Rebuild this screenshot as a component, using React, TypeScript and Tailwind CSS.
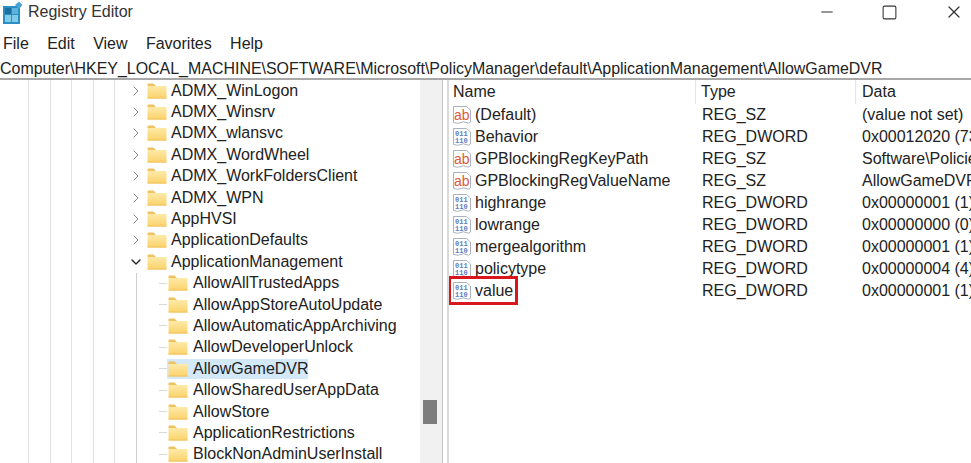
import { ChevronRight, ChevronDown, Minus, Square, X } from 'lucide-react';

const topKeys = [
  'ADMX_WinLogon',
  'ADMX_Winsrv',
  'ADMX_wlansvc',
  'ADMX_WordWheel',
  'ADMX_WorkFoldersClient',
  'ADMX_WPN',
  'AppHVSI',
  'ApplicationDefaults',
];

const childKeys = [
  'AllowAllTrustedApps',
  'AllowAppStoreAutoUpdate',
  'AllowAutomaticAppArchiving',
  'AllowDeveloperUnlock',
  'AllowGameDVR',
  'AllowSharedUserAppData',
  'AllowStore',
  'ApplicationRestrictions',
  'BlockNonAdminUserInstall',
];

const values = [
  { name: '(Default)', kind: 'sz', type: 'REG_SZ', data: '(value not set)' },
  { name: 'Behavior', kind: 'dw', type: 'REG_DWORD', data: '0x00012020 (73760)' },
  { name: 'GPBlockingRegKeyPath', kind: 'sz', type: 'REG_SZ', data: 'Software\\Policies\\Microsoft' },
  { name: 'GPBlockingRegValueName', kind: 'sz', type: 'REG_SZ', data: 'AllowGameDVR' },
  { name: 'highrange', kind: 'dw', type: 'REG_DWORD', data: '0x00000001 (1)' },
  { name: 'lowrange', kind: 'dw', type: 'REG_DWORD', data: '0x00000000 (0)' },
  { name: 'mergealgorithm', kind: 'dw', type: 'REG_DWORD', data: '0x00000001 (1)' },
  { name: 'policytype', kind: 'dw', type: 'REG_DWORD', data: '0x00000004 (4)' },
  { name: 'value', kind: 'dw', type: 'REG_DWORD', data: '0x00000001 (1)' },
];

function Folder() {
  return (
    <svg width="20" height="16" viewBox="0 0 20 16" className="shrink-0">
      <defs>
        <linearGradient id="folderFill" x1="0" y1="0" x2="0" y2="1">
          <stop offset="0" stopColor="#fdeaa8" />
          <stop offset="1" stopColor="#fbd26a" />
        </linearGradient>
      </defs>
      <path d="M0.5 1.5 a1 1 0 0 1 1-1 h5 l2.5 2.5 h-8.5z" fill="#eec25c" />
      <rect x="0.5" y="3" width="19" height="12.5" rx="0.5" fill="url(#folderFill)" />
      <rect x="0.5" y="14.6" width="19" height="0.9" fill="#efc05a" />
    </svg>
  );
}

function AppIcon() {
  return (
    <svg width="24" height="24" viewBox="0 0 24 24" className="shrink-0">
      <rect x="3" y="5" width="17" height="18" fill="#2b8fc4" />
      <rect x="5" y="7" width="6" height="6" fill="#1b6f9f" />
      <rect x="12" y="7" width="6" height="6" fill="#5cb4dd" />
      <rect x="5" y="14" width="6" height="7" fill="#7fcbe9" />
      <rect x="12" y="14" width="6" height="7" fill="#7fcbe9" />
      <path d="M15 4 L19 0.5 L22.5 4 L19 8z" fill="#4aa3d0" />
    </svg>
  );
}

function ValueIcon({ kind }: { kind: string }) {
  return (
    <svg width="21" height="21" viewBox="0 0 21 21" className="shrink-0">
      <path d="M1.5 1.5 h13 l4 3.5 v12 q-2 2 -4.5 0.5 q-3 -1.5 -5 0 q-3 1.5 -7.5 0z" fill="#fff" stroke="#aab2bd" />
      {kind === 'sz' ? (
        <text x="2" y="14.5" fontSize="14" fontFamily="Liberation Sans, sans-serif" fill="#dd5a38">ab</text>
      ) : (
        <>
          <text x="3" y="8.5" fontSize="7" fontWeight="700" fontFamily="Liberation Mono, monospace" fill="#5a7cc0">011</text>
          <text x="3" y="16" fontSize="7" fontWeight="700" fontFamily="Liberation Mono, monospace" fill="#5a7cc0">110</text>
        </>
      )}
    </svg>
  );
}

function Guides({ child }: { child?: boolean }) {
  return (
    <div className="flex h-full shrink-0">
      <div className="w-[29px] border-r border-[#e2e2e2]" />
      <div className="w-[22px] border-r border-[#e2e2e2]" />
      <div className="w-[21px] border-r border-[#e2e2e2]" />
      <div className="w-[22px] border-r border-[#e2e2e2]" />
      <div className="w-[21px] border-r border-[#e2e2e2]" />
      {child && <div className="w-[22px] border-r border-[#cfcfcf]" />}
    </div>
  );
}

export default function App() {
  return (
    <div
      className="w-[971px] h-[463px] overflow-hidden bg-white text-[16px] text-[#222] flex flex-col"
      style={{ fontFamily: '"Liberation Sans", Arial, sans-serif' }}
    >
      {/* Title bar */}
      <div className="h-[24px] flex items-center shrink-0">
        <div className="mt-[2px]">
          <AppIcon />
        </div>
        <span className="ml-[4px] text-[16px] text-[#333]">Registry Editor</span>
        <div className="ml-auto flex items-center text-[#333]">
          <Minus className="w-[18px] h-[18px] mr-[45px]" strokeWidth={1.5} />
          <Square className="w-[17px] h-[17px] mr-[46px]" strokeWidth={1.5} />
          <X className="w-[20px] h-[20px] mr-[7px]" strokeWidth={1.5} />
        </div>
      </div>

      {/* Menu */}
      <div className="h-[35px] pt-[5px] flex items-center gap-[18.4px] pl-[3px] shrink-0">
        {['File', 'Edit', 'View', 'Favorites', 'Help'].map((m) => (
          <span key={m}>{m}</span>
        ))}
      </div>

      {/* Address bar */}
      <div className="h-[21px] flex items-center border-b-2 border-[#a8a8a8] shrink-0 whitespace-nowrap text-[15.96px]">
        Computer\HKEY_LOCAL_MACHINE\SOFTWARE\Microsoft\PolicyManager\default\ApplicationManagement\AllowGameDVR
      </div>

      <div className="flex flex-1 min-h-0">
        {/* Tree */}
        <div className="w-[420px] shrink-0 overflow-hidden">
          {topKeys.map((k) => (
            <div key={k} className="h-[21.4px] flex items-center">
              <Guides />
              <ChevronRight className="w-4 h-4 ml-[13px] mr-[3px] text-[#888]" strokeWidth={1.5} />
              <Folder />
              <span className="ml-[4px] whitespace-nowrap">{k}</span>
            </div>
          ))}
          <div className="h-[21.4px] flex items-center">
            <Guides />
            <ChevronDown className="w-4 h-4 ml-[13px] mr-[3px] text-[#222]" strokeWidth={2} />
            <Folder />
            <span className="ml-[4px] whitespace-nowrap">ApplicationManagement</span>
          </div>
          {childKeys.map((k) => (
            <div key={k} className="h-[21.4px] flex items-center">
              <Guides child />
              <div className="w-[8px] ml-[22px] border-t border-[#d8d8d8] mr-[1px]" />
              <div
                className={
                  k === 'AllowGameDVR'
                    ? 'flex items-center h-[20px] w-[141px] bg-[#d3e9f8] -ml-[1px] pl-[1px]'
                    : 'flex items-center'
                }
              >
                <Folder />
                <span className="ml-[5px] whitespace-nowrap">{k}</span>
              </div>
            </div>
          ))}
        </div>

        {/* Scrollbar */}
        <div className="w-[22px] shrink-0 bg-[#f1f1f1] flex flex-col items-center pt-[320px]">
          <div className="w-[14px] h-[24px] bg-[#7d7d7d] -ml-[3px]" />
        </div>

        {/* Splitter */}
        <div className="w-[7px] shrink-0 border-l border-[#c4c4c4] border-r-2 border-r-[#dadada]" />

        {/* Values */}
        <div className="flex-1 min-w-0 overflow-hidden">
          <div className="h-[24px] flex items-center whitespace-nowrap">
            <span className="w-[247px] shrink-0 pl-[4px] border-r border-[#e5e5e5]">Name</span>
            <span className="w-[160px] shrink-0 pl-[5px] border-r border-[#e5e5e5]">Type</span>
            <span className="shrink-0 pl-[6px]">Data</span>
          </div>
          {values.map((v) => (
            <div key={v.name} className="h-[22px] flex items-center whitespace-nowrap">
              <div className="w-[247px] shrink-0 flex items-center pl-[3px]">
                <div className="relative flex items-center">
                  <ValueIcon kind={v.kind} />
                  <span className="ml-[2px]">{v.name}</span>
                  {v.name === 'value' && (
                    <div className="absolute -left-[4px] -top-[3px] -bottom-[2px] -right-[5px] border-[3px] border-[#d9161e]" />
                  )}
                </div>
              </div>
              <span className="w-[160px] shrink-0 pl-[6px]">{v.type}</span>
              <span className="shrink-0 pl-[6px]">{v.data}</span>
            </div>
          ))}
        </div>
      </div>
    </div>
  );
}
